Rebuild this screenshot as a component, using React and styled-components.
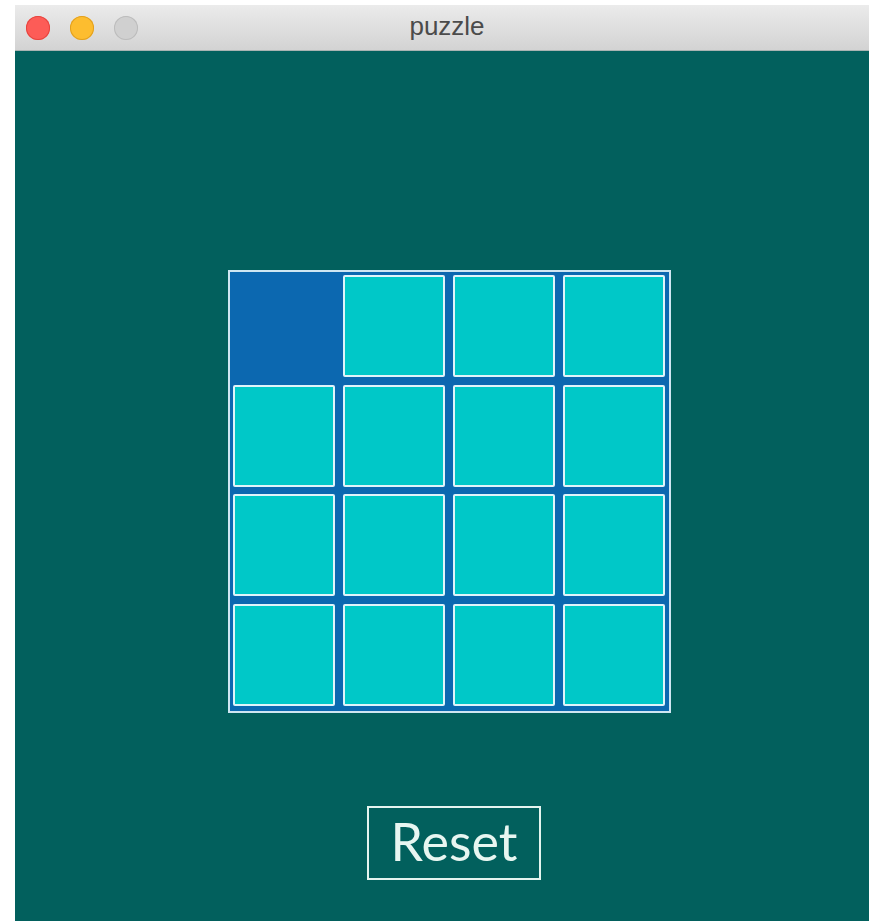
import React from "react";
import styled, { createGlobalStyle } from "styled-components";

const Global = createGlobalStyle`
  html, body {
    margin: 0;
    padding: 0;
    background: #ffffff;
    overflow: hidden;
  }
  * { box-sizing: border-box; }
`;

const Window = styled.div`
  margin: 5px 0 0 15px;
  width: 854px;
  height: 916px;
  display: flex;
  flex-direction: column;
  background: #02605d;
`;

const TitleBar = styled.div`
  position: relative;
  height: 46px;
  flex: none;
  display: flex;
  align-items: center;
  justify-content: center;
  background: linear-gradient(#ebebeb, #d3d3d3);
  border-bottom: 1px solid #a9b3b2;
`;

const Lights = styled.div`
  position: absolute;
  left: 11px;
  top: 11px;
  display: flex;
  gap: 20px;
`;

const Light = styled.span`
  width: 24px;
  height: 24px;
  border-radius: 50%;
  background: ${(p) => p.$fill};
  box-shadow: inset 0 0 0 1px ${(p) => p.$edge};
`;

const Title = styled.div`
  font-family: "Liberation Sans", Arial, sans-serif;
  font-size: 26px;
  color: #4b4b4b;
  margin: 0 0 2px 10px;
`;

const Content = styled.div`
  flex: 1;
  display: flex;
  flex-direction: column;
  align-items: center;
  padding: 219px 0 0 15px;
`;

const Board = styled.div`
  width: 443px;
  height: 443px;
  border: 2px solid #cfe6f2;
  background: #0c68b0;
  padding: 3px 4px 4px 3px;
  display: grid;
  grid-template-columns: repeat(4, 102px);
  grid-template-rows: repeat(4, 102px);
  column-gap: 8px;
  row-gap: 7.5px;
`;

const Tile = styled.div`
  background: ${(p) => (p.$empty ? "transparent" : "#00c8c8")};
  border: ${(p) => (p.$empty ? "none" : "2px solid #dff4fa")};
  border-radius: 2px;
`;

const ResetButton = styled.button`
  margin: 93px 0 0 9px;
  width: 174px;
  height: 74px;
  background: transparent;
  border: 2px solid #e4f4ef;
  color: #e8f6f1;
  font-family: Lato, "Open Sans", sans-serif;
  font-weight: 400;
  font-size: 52px;
  line-height: 1;
  padding: 0 0 4px;
  cursor: pointer;
`;

const tiles = Array.from({ length: 16 }, (_, i) => i);

export default function App() {
  return (
    <>
      <Global />
      <Window>
        <TitleBar>
          <Lights>
            <Light $fill="#fd5c57" $edge="#e6453f" />
            <Light $fill="#fdbd2f" $edge="#e2a020" />
            <Light $fill="#d0d0d0" $edge="#bcbcbc" />
          </Lights>
          <Title>puzzle</Title>
        </TitleBar>
        <Content>
          <Board>
            {tiles.map((i) => (
              <Tile key={i} $empty={i === 0} />
            ))}
          </Board>
          <ResetButton>Reset</ResetButton>
        </Content>
      </Window>
    </>
  );
}
